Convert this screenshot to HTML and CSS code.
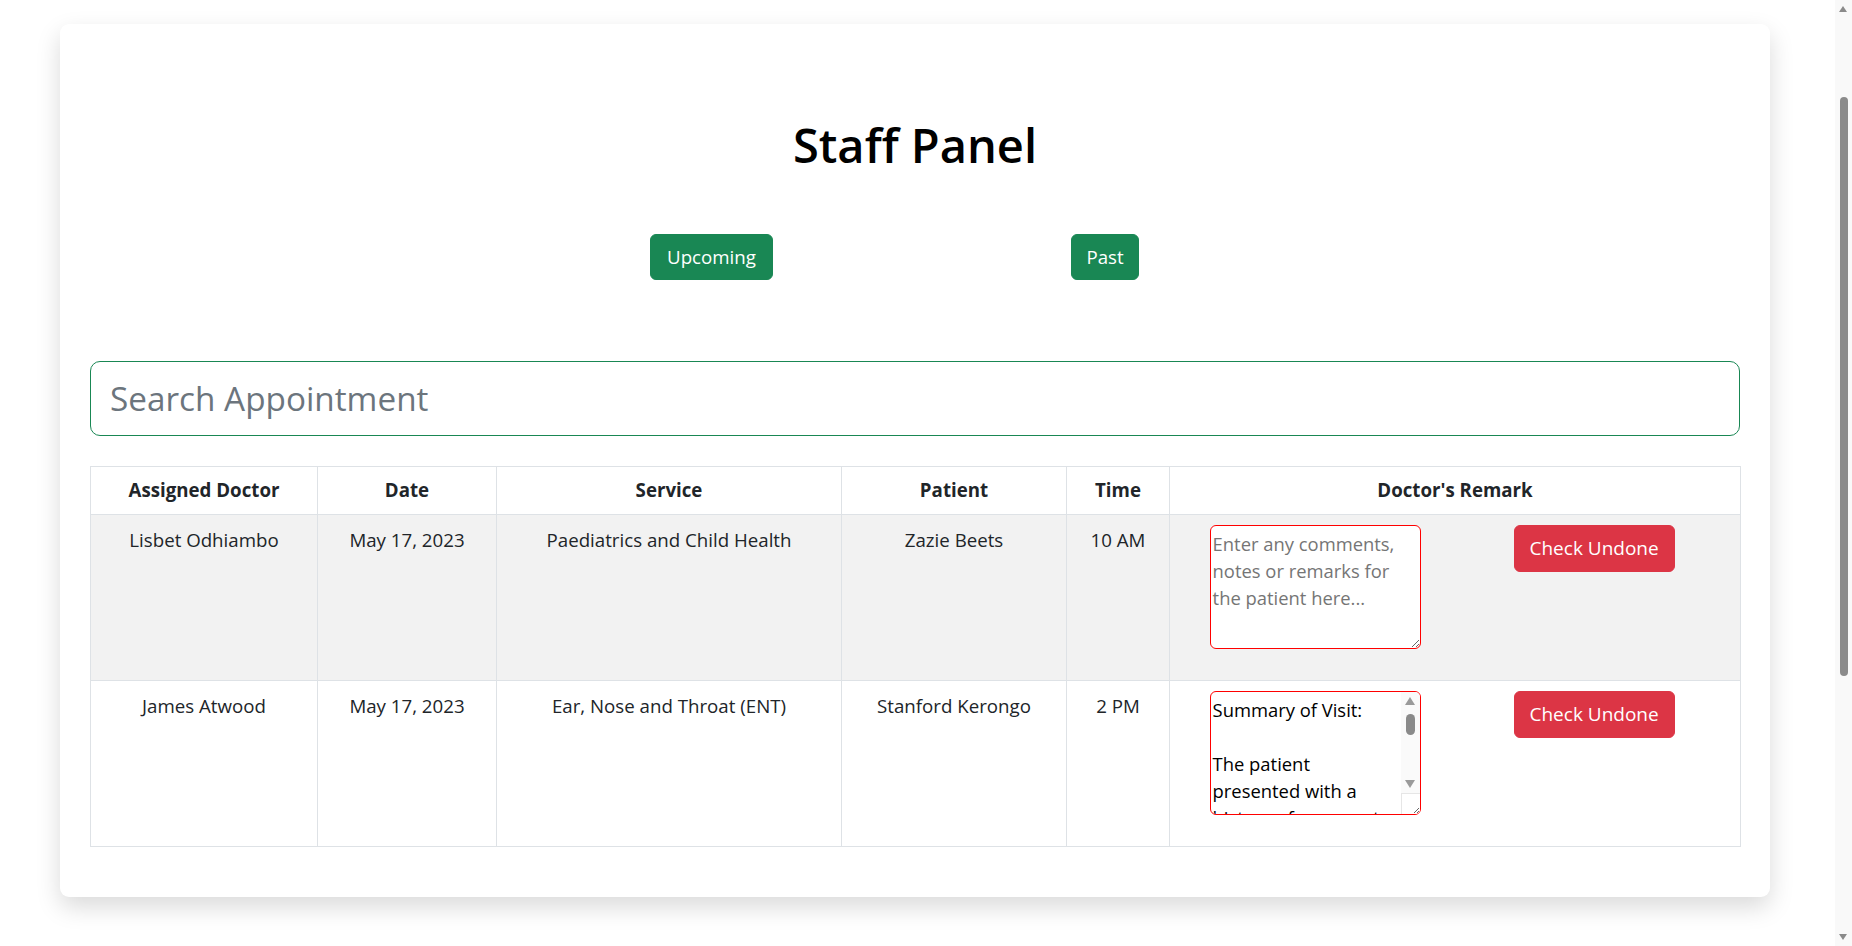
FILE: index.html
```html
<!DOCTYPE html>
<html lang="en">
<head>
<meta charset="utf-8">
<title>Staff Panel</title>
<link rel="stylesheet" href="styles.css">
</head>
<body>
<div class="page">
  <main class="panel">
    <h1 class="title">Staff Panel</h1>
    <div class="tabs">
      <button class="btn btn-success btn-upcoming">Upcoming</button>
      <button class="btn btn-success btn-past">Past</button>
    </div>
    <input class="search" type="text" placeholder="Search Appointment">
    <table class="appts">
      <colgroup>
        <col class="c-doctor"><col class="c-date"><col class="c-service"><col class="c-patient"><col class="c-time"><col class="c-remark">
      </colgroup>
      <thead>
        <tr>
          <th>Assigned Doctor</th>
          <th>Date</th>
          <th>Service</th>
          <th>Patient</th>
          <th>Time</th>
          <th>Doctor's Remark</th>
        </tr>
      </thead>
      <tbody>
        <tr class="striped">
          <td>Lisbet Odhiambo</td>
          <td>May 17, 2023</td>
          <td>Paediatrics and Child Health</td>
          <td>Zazie Beets</td>
          <td>10 AM</td>
          <td class="remark-cell">
            <div class="remark">
              <div class="remark-field">
                <textarea class="remark-box" placeholder="Enter any comments, notes or remarks for the patient here..."></textarea>
              </div>
              <button class="btn btn-danger">Check Undone</button>
            </div>
          </td>
        </tr>
        <tr>
          <td>James Atwood</td>
          <td>May 17, 2023</td>
          <td>Ear, Nose and Throat (ENT)</td>
          <td>Stanford Kerongo</td>
          <td>2 PM</td>
          <td class="remark-cell">
            <div class="remark">
              <div class="remark-field">
                <textarea class="remark-box remark-box--filled">Summary of Visit:

The patient presented with a history of recurrent sore throat and nasal congestion over the past three weeks. Examination revealed mild tonsillar enlargement and inflamed nasal mucosa. Prescribed a course of antibiotics and a saline nasal spray. Advised to review in two weeks.</textarea>
                <div class="ta-scroll" aria-hidden="true">
                  <span class="ta-up"></span>
                  <span class="ta-thumb"></span>
                  <span class="ta-down"></span>
                  <span class="ta-corner"></span>
                </div>
              </div>
              <button class="btn btn-danger">Check Undone</button>
            </div>
          </td>
        </tr>
      </tbody>
    </table>
  </main>
</div>
<div class="vscroll" aria-hidden="true">
  <span class="vscroll-up"></span>
  <span class="vscroll-thumb"></span>
  <span class="vscroll-down"></span>
</div>
</body>
</html>
```

FILE: styles.css
```css
html, body {
  margin: 0;
  padding: 0;
  background: #fff;
  overflow: hidden;
}

body {
  font-family: "Open Sans", "Noto Sans", "Liberation Sans", sans-serif;
  color: #212529;
  font-size: 18.7px;
  line-height: 1.5;
}

.page {
  padding: 24px 0 50px 60px;
  box-sizing: border-box;
}

.panel {
  width: 1710px;
  box-sizing: border-box;
  padding: 92px 30px 50px;
  background: #fff;
  border-radius: 9px;
  box-shadow: 0 10px 24px rgba(0, 0, 0, 0.15);
  display: flex;
  flex-direction: column;
}

.title {
  margin: 0 0 60px;
  font-size: 47px;
  line-height: 58px;
  font-weight: 600;
  text-align: center;
  color: #000;
}

.tabs {
  display: flex;
  justify-content: center;
  gap: 298px;
  padding-right: 41px;
  margin-bottom: 81px;
}

.btn {
  font-family: inherit;
  font-size: 18.7px;
  line-height: 28.8px;
  padding: 7.6px 14.4px;
  border: 1px solid transparent;
  border-radius: 6px;
  color: #fff;
  cursor: pointer;
  box-sizing: border-box;
}

.btn-success {
  background: #198754;
  border-color: #198754;
}

.btn-upcoming { width: 123px; }
.btn-past { width: 68px; }

.btn-danger {
  background: #dc3545;
  border-color: #dc3545;
  width: 161px;
  height: 47px;
  padding: 0;
  flex: none;
  font-size: 19px;
}

.search {
  display: block;
  width: 100%;
  height: 75px;
  box-sizing: border-box;
  margin: 0 0 30px;
  padding: 0 19px;
  border: 1px solid #198754;
  border-radius: 10px;
  font-family: inherit;
  font-size: 33.3px;
  color: #212529;
  outline: none;
}

.search::placeholder {
  color: #6c757d;
}

.appts {
  width: 100%;
  table-layout: fixed;
  border-collapse: collapse;
}

.c-doctor { width: 227px; }
.c-date { width: 179px; }
.c-service { width: 345px; }
.c-patient { width: 225px; }
.c-time { width: 103px; }
.c-remark { width: 571px; }

.appts th,
.appts td {
  border: 1px solid #dee2e6;
  padding: 11px 9.6px 7px;
  text-align: center;
  vertical-align: top;
}

.appts th {
  font-weight: 700;
  height: 28px;
  padding: 9.5px 9.6px 9.5px;
}

.appts tbody tr {
  height: 166px;
}

.appts tbody tr.striped td {
  background: #f2f2f2;
}

.appts td.remark-cell {
  padding-top: 10px;
}

.remark {
  display: flex;
  align-items: flex-start;
  gap: 93px;
  padding-left: 30px;
}

.remark-field {
  position: relative;
  flex: none;
  width: 211px;
  height: 124px;
}

.remark-box {
  display: block;
  width: 211px;
  height: 124px;
  box-sizing: border-box;
  padding: 4px 2px 1px;
  margin: 0;
  border: 1px solid #ff0000;
  border-radius: 6px;
  font-family: inherit;
  font-size: 18.4px;
  line-height: 27px;
  color: #000;
  background: #fff;
  resize: vertical;
  text-align: left;
  overflow: hidden;
}

.remark-box--filled {
  padding-right: 22px;
}

.remark-box::placeholder {
  color: #757575;
}

/* textarea scrollbar, drawn over the field's right edge */
.ta-scroll {
  position: absolute;
  top: 1px;
  right: 1px;
  bottom: 1px;
  width: 19px;
  background: #fafafa;
  border-radius: 0 5px 5px 0;
}

.ta-up,
.ta-down {
  position: absolute;
  left: 4.5px;
  width: 0;
  height: 0;
  border-left: 5px solid transparent;
  border-right: 5px solid transparent;
}

.ta-up {
  top: 5px;
  border-bottom: 8px solid #9a9a9a;
}

.ta-down {
  top: 88px;
  border-top: 8px solid #9a9a9a;
}

.ta-thumb {
  position: absolute;
  top: 22px;
  left: 5px;
  width: 9px;
  height: 21px;
  border-radius: 5px;
  background: #8a8a8a;
}

.ta-corner {
  position: absolute;
  left: 0;
  right: 0;
  bottom: 0;
  height: 21px;
  box-sizing: border-box;
  border-top: 1px solid #e6e6e6;
  border-left: 1px solid #e6e6e6;
  border-bottom-right-radius: 5px;
  background:
    linear-gradient(135deg, transparent 72%, #666 72%, #666 77%, transparent 77%, transparent 86%, #666 86%, #666 91%, transparent 91%) no-repeat right 1px bottom 1px / 10px 10px,
    #fff;
}

/* browser window scrollbar, drawn over the right edge */
.vscroll {
  position: fixed;
  top: 0;
  right: 0;
  width: 17px;
  height: 100%;
  background: #f9f9f9;
}

.vscroll-up,
.vscroll-down {
  position: absolute;
  left: 4px;
  width: 0;
  height: 0;
  border-left: 4.5px solid transparent;
  border-right: 4.5px solid transparent;
}

.vscroll-up {
  top: 6px;
  border-bottom: 6px solid #8a8a8a;
}

.vscroll-down {
  bottom: 6px;
  border-top: 6px solid #8a8a8a;
}

.vscroll-thumb {
  position: absolute;
  left: 5px;
  top: 97px;
  width: 8px;
  height: 579px;
  border-radius: 4px;
  background: #8b8b8b;
}
```
